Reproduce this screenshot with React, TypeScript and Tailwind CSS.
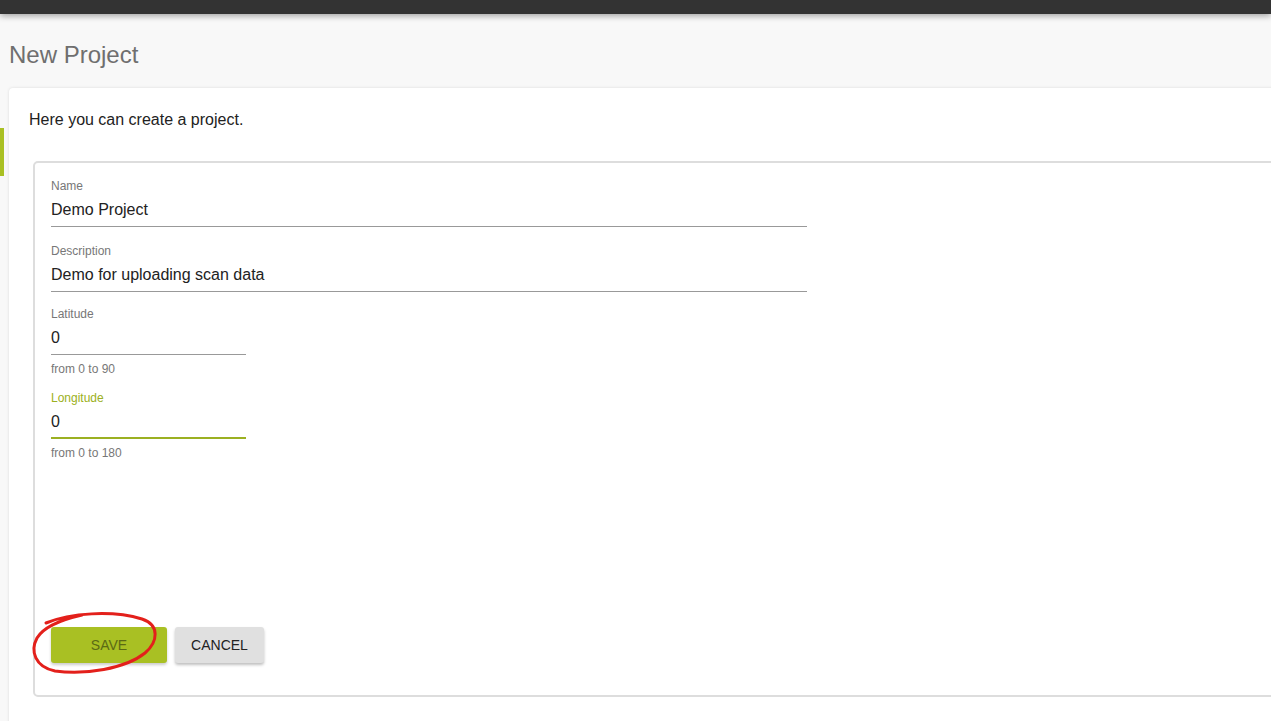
import React from "react";

function Field({
  label,
  value,
  width,
  helper,
  focused,
  className,
}: {
  label: string;
  value: string;
  width: string;
  helper?: string;
  focused?: boolean;
  className?: string;
}) {
  return (
    <div className={className}>
      <div className={`text-[12px] leading-[16px] ${focused ? "text-[#9bb021]" : "text-[#777]"}`}>{label}</div>
      <div
        className={`${width} h-[33px] flex items-center text-[16px] text-[#222] ${
          focused ? "border-b-2 border-[#9bb021]" : "border-b border-[#999]"
        }`}
      >
        {value}
      </div>
      {helper && <div className="mt-[6px] text-[12px] leading-[16px] text-[#777]">{helper}</div>}
    </div>
  );
}

export default function App() {
  return (
    <div
      className="relative w-[1271px] h-[721px] overflow-hidden bg-[#f8f8f8]"
      style={{ fontFamily: '"Liberation Sans", Arial, sans-serif' }}
    >
      <div className="h-[14px] bg-[#333] shadow-[0_2px_6px_rgba(0,0,0,0.35)] relative z-10" />
      <div className="absolute left-0 top-[128px] w-[4px] h-[48px] bg-[#a9c023]" />
      <h1 className="pl-[9px] pt-[25px] text-[24px] leading-[32px] text-[#6f6f6f]">New Project</h1>
      <div className="ml-[9px] mr-[-20px] mt-[17px] h-[700px] bg-white rounded-tl-[4px] shadow-[0_0_3px_rgba(0,0,0,0.12)] pt-[20px]">
        <p className="pl-[20px] text-[16px] leading-[24px] text-[#222]">Here you can create a project.</p>
        <div className="ml-[24px] mt-[29px] h-[536px] border-2 border-[#ddd] rounded-[5px] pl-[16px] pt-[15px] pb-[32px] flex flex-col">
          <Field label="Name" value="Demo Project" width="w-[756px]" />
          <Field className="mt-[16px]" label="Description" value="Demo for uploading scan data" width="w-[756px]" />
          <Field className="mt-[14px]" label="Latitude" value="0" width="w-[195px]" helper="from 0 to 90" />
          <Field className="mt-[13px]" label="Longitude" value="0" width="w-[195px]" helper="from 0 to 180" focused />
          <div className="mt-auto flex gap-[8px]">
            <button className="w-[116px] h-[36px] rounded-[3px] bg-[#a9c023] text-[14px] text-[#5b6a14] shadow-[0_2px_3px_rgba(0,0,0,0.2)]">
              SAVE
            </button>
            <button className="w-[89px] h-[36px] rounded-[3px] bg-[#e0e0e0] text-[14px] text-[#222] shadow-[0_2px_3px_rgba(0,0,0,0.25)]">
              CANCEL
            </button>
          </div>
        </div>
      </div>
      <svg className="absolute left-0 top-0 pointer-events-none" width="1271" height="721" viewBox="0 0 1271 721">
        <path
          d="M 46 623 C 70 613, 112 610, 142 619 C 160 625, 158 642, 145 653 C 125 669, 85 675, 55 671 C 35 667, 30 651, 37 638 C 43 628, 60 620, 82 615"
          fill="none"
          stroke="#e3201b"
          strokeWidth="3"
          strokeLinecap="round"
        />
      </svg>
    </div>
  );
}
